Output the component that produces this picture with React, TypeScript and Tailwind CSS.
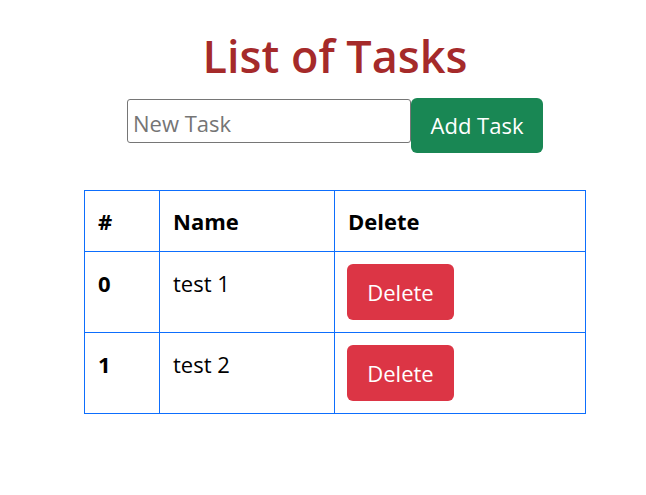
import { useState } from "react";

type Task = { id: number; name: string };

const App = () => {
    const [task, setTask] = useState<string>("");
    const [tasks, setTasks] = useState<Task[]>([
        { id: 0, name: "test 1" },
        { id: 1, name: "test 2" },
    ]);

    const addTask = () => {
        if (task.trim() === "") return;
        setTasks([...tasks, { id: tasks.length, name: task }]);
        setTask("");
    };

    const removeTask = (id: number) => {
        setTasks(tasks.filter((t) => t.id !== id));
    };

    return (
        <main className="min-h-[495px] bg-white font-['Open_Sans',sans-serif] text-black">
            <section className="flex flex-col items-center pl-[24px] pt-[27px]">
                <h1 className="text-[45px] leading-[58px] font-semibold text-[#a52a2a]">List of Tasks</h1>
                <div className="mt-[13px] flex items-start">
                    <input
                        type="text"
                        className="mt-[1px] h-[44px] w-[284px] rounded-[3px] border border-[#767676] px-[5px] pt-[3px] text-[22px] placeholder:text-[#757575] focus:outline-none"
                        placeholder="New Task"
                        value={task}
                        onChange={(e) => setTask(e.target.value)}
                    />
                    <button
                        className="h-[55px] w-[132px] rounded-[6px] bg-[#198754] text-[22px] text-white"
                        onClick={addTask}
                    >
                        Add Task
                    </button>
                </div>
                <table className="mt-[37px] w-[502px] border-collapse border border-[#0d6efd] text-[22px] leading-[30px]">
                    <thead>
                        <tr className="h-[61px]">
                            <th className="w-[75px] border border-[#0d6efd] px-[13px] pt-[15px] text-left align-top font-bold">#</th>
                            <th className="w-[175px] border border-[#0d6efd] px-[13px] pt-[15px] text-left align-top font-bold">Name</th>
                            <th className="border border-[#0d6efd] px-[13px] pt-[15px] text-left align-top font-bold">Delete</th>
                        </tr>
                    </thead>
                    <tbody>
                        {tasks.map((t) => (
                            <tr key={t.id} className="h-[81px]">
                                <td className="border border-[#0d6efd] px-[13px] pt-[16px] align-top font-bold">{t.id}</td>
                                <td className="border border-[#0d6efd] px-[13px] pt-[16px] align-top">{t.name}</td>
                                <td className="border border-[#0d6efd] px-[12px] pt-[12px] align-top">
                                    <button
                                        className="flex h-[56px] w-[107px] items-center justify-center rounded-[6px] bg-[#dc3545] text-[22px] text-white"
                                        onClick={() => removeTask(t.id)}
                                    >
                                        Delete
                                    </button>
                                </td>
                            </tr>
                        ))}
                    </tbody>
                </table>
            </section>
        </main>
    );
};

export default App;
